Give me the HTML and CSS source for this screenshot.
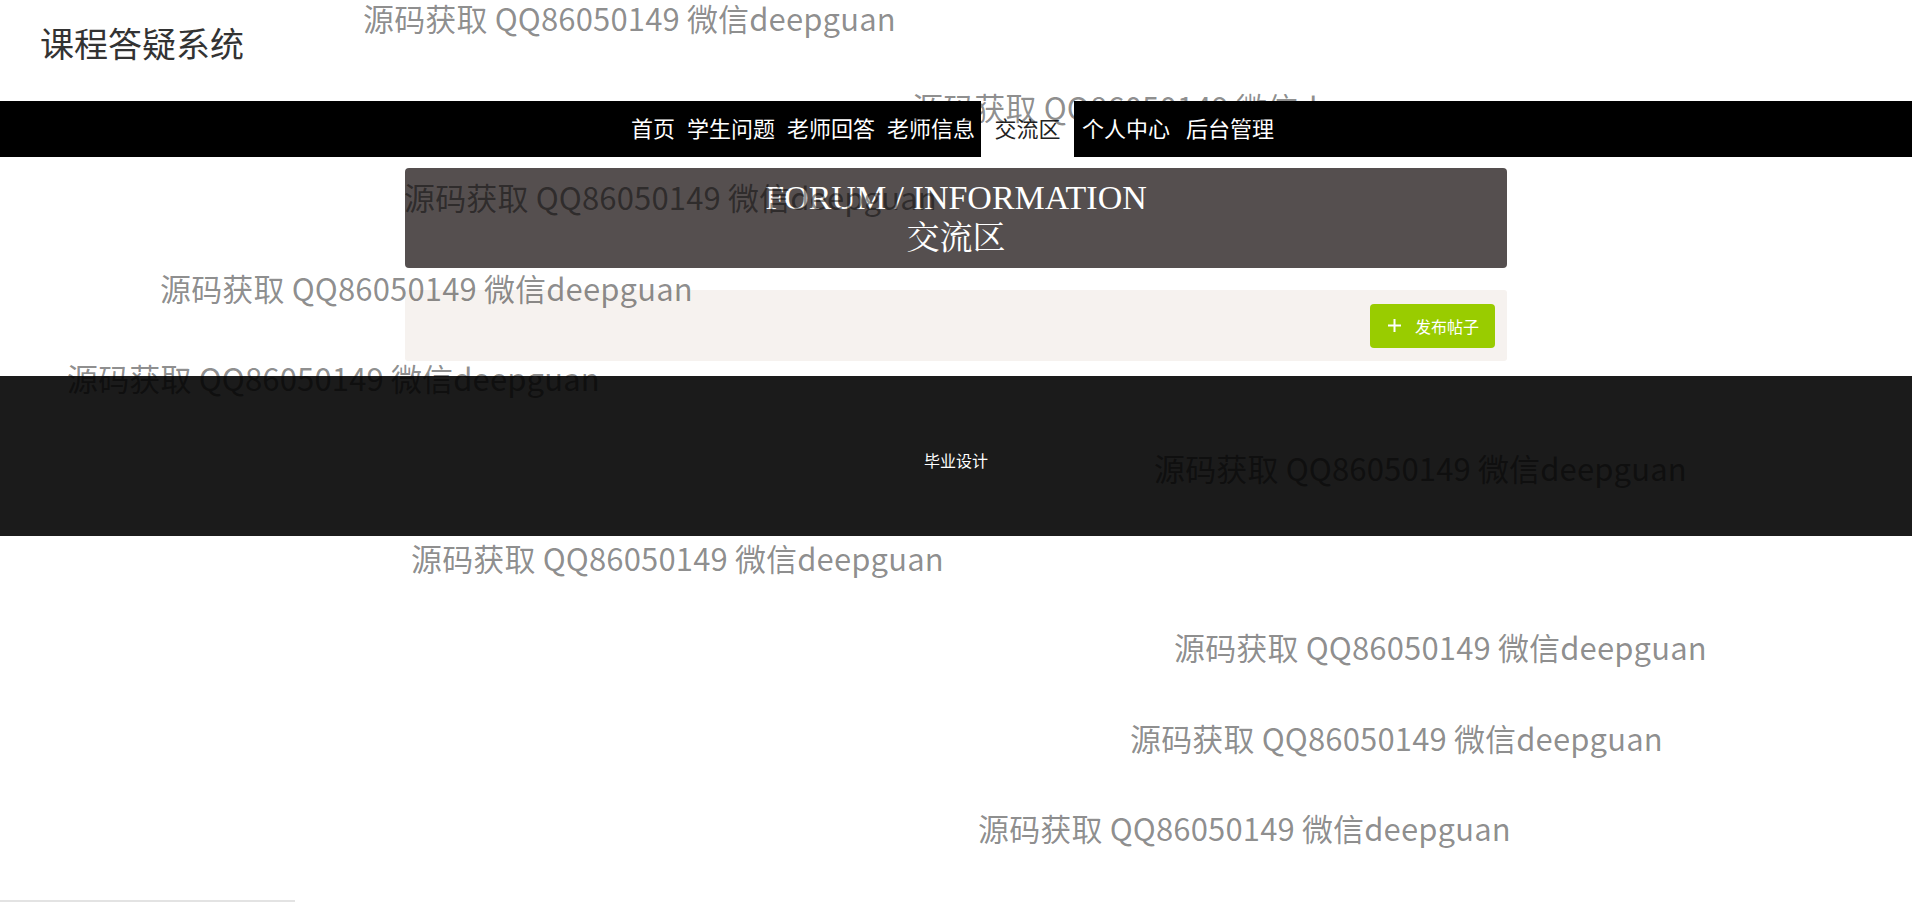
FILE: index.html
```html
<!DOCTYPE html>
<html lang="zh-CN">
<head>
<meta charset="utf-8">
<title>课程答疑系统</title>
<link rel="stylesheet" href="styles.css">
</head>
<body>
<header class="site-header">
  <div class="site-title">课程答疑系统</div>
</header>
<nav class="main-nav">
  <ul class="nav-list">
    <li class="nav-item">首页</li>
    <li class="nav-item">学生问题</li>
    <li class="nav-item">老师回答</li>
    <li class="nav-item">老师信息</li>
    <li class="nav-item active">交流区</li>
    <li class="nav-item wide">个人中心</li>
    <li class="nav-item wide">后台管理</li>
  </ul>
</nav>
<main class="content">
  <section class="banner">
    <div class="banner-en">FORUM / INFORMATION</div>
    <div class="banner-cn">交流区</div>
  </section>
  <section class="toolbar">
    <button class="btn-add" type="button">
      <svg class="plus" width="13" height="13" viewBox="0 0 13 13"><path d="M6.5 0v13M0 6.5h13" stroke="#fff" stroke-width="2"/></svg>
      <span>发布帖子</span>
    </button>
  </section>
</main>
<footer class="site-footer">
  <span>毕业设计</span>
</footer>
<div class="bottom-line"></div>

<div class="wm wm1">源码获取 QQ86050149 微信deepguan</div>
<div class="wm wm2">源码获取 QQ86050149 微信deepguan</div>
<div class="wm wm3">源码获取 QQ86050149 微信deepguan</div>
<div class="wm wm4">源码获取 QQ86050149 微信deepguan</div>
<div class="wm wm5">源码获取 QQ86050149 微信deepguan</div>
<div class="wm wm6">源码获取 QQ86050149 微信deepguan</div>
<div class="wm wm7">源码获取 QQ86050149 微信deepguan</div>
<div class="wm wm8">源码获取 QQ86050149 微信deepguan</div>
<div class="wm wm9">源码获取 QQ86050149 微信deepguan</div>
<div class="wm wm10">源码获取 QQ86050149 微信deepguan</div>
</body>
</html>
```
FILE: styles.css
```css
* { box-sizing: border-box; }
html, body { margin: 0; padding: 0; }
body {
  font-family: "Noto Sans CJK SC", "Noto Sans", sans-serif;
  background: #fff;
  color: #333;
  position: relative;
  min-height: 902px;
  overflow: hidden;
}
.site-header {
  height: 101px;
  padding: 26px 0 0 40px;
}
.site-title {
  font-size: 34px;
  line-height: 34px;
  color: #333;
}
.main-nav {
  height: 56px;
  background: #000;
}
.nav-list {
  list-style: none;
  margin: 0;
  padding: 0 5px 0 0;
  height: 56px;
  display: flex;
  justify-content: center;
}
.nav-item {
  font-size: 22px;
  line-height: 53px;
  padding: 0 6px 3px;
  color: #fff;
}
.nav-item.wide {
  padding: 0 8px 3px;
}
.nav-item.active {
  background: #fff;
  color: #222;
  padding: 0 13.5px 3px;
}
.content {
  padding-top: 11px;
}
.banner {
  width: 1102px;
  margin: 0 auto;
  height: 100px;
  padding-top: 10px;
  background: #554f4f;
  border-radius: 4px;
  color: #fff;
  text-align: center;
  font-family: "Liberation Serif", "Noto Serif CJK SC", "Noto Sans CJK SC", serif;
  font-size: 34px;
  line-height: 40px;
}
.banner-cn { font-size: 33px; }
.toolbar {
  width: 1102px;
  margin: 22px auto 0;
  height: 71px;
  background: #f6f2ef;
  border-radius: 3px;
  display: flex;
  justify-content: flex-end;
  align-items: center;
  padding-right: 12px;
}
.btn-add {
  height: 44px;
  width: 125px;
  border: 0;
  border-radius: 4px;
  background: #99cc00;
  color: #fff;
  font-family: "Noto Sans CJK SC", sans-serif;
  font-size: 16px;
  display: inline-flex;
  align-items: center;
  padding: 0 0 0 18px;
  gap: 14px;
}
.plus { display: block; }
.site-footer {
  margin-top: 15px;
  height: 160px;
  background: #1b1b1b;
  color: #fff;
  font-size: 16px;
  display: flex;
  justify-content: center;
  align-items: center;
  padding-top: 8px;
}
.bottom-line {
  position: fixed;
  left: 0;
  bottom: 0;
  width: 295px;
  height: 2px;
  background: #e3e3e3;
}
.wm {
  position: absolute;
  white-space: nowrap;
  font-family: "Noto Sans CJK SC", sans-serif;
  font-size: 31px;
  line-height: 30px;
  letter-spacing: 0.15px;
  color: rgba(0, 0, 0, 0.46);
  pointer-events: none;
}
.wm1 { left: 363px; top: 3px; }
.wm2 { left: 912px; top: 92px; }
.wm3 { left: 404px; top: 182px; }
.wm4 { left: 160px; top: 273px; }
.wm5 { left: 67px; top: 363px; }
.wm6 { left: 1154px; top: 453px; }
.wm7 { left: 411px; top: 543px; }
.wm8 { left: 1174px; top: 632px; }
.wm9 { left: 1130px; top: 723px; }
.wm10 { left: 978px; top: 813px; }
```
